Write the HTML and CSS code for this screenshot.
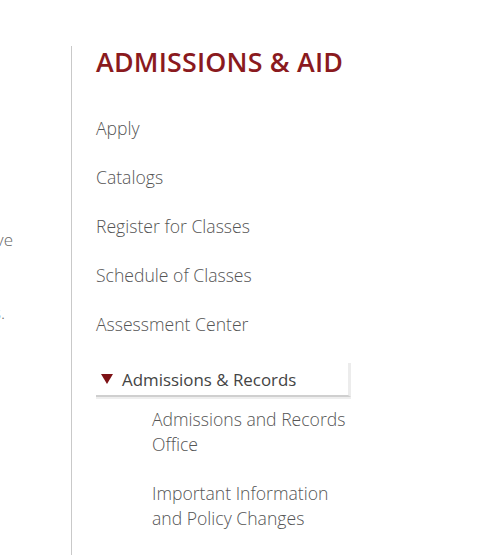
FILE: index.html
```html
<!DOCTYPE html>
<html lang="en">
<head>
<meta charset="utf-8">
<link rel="stylesheet" href="styles.css">
</head>
<body>
<div class="page">
  <div class="left">
    <div class="left-inner">
      <p class="frag frag-1">students who achieve</p>
      <p class="frag frag-2">their goals.</p>
    </div>
  </div>
  <nav class="side">
    <h2 class="title">ADMISSIONS &amp; AID</h2>
    <ul class="menu">
      <li><a href="#">Apply</a></li>
      <li><a href="#">Catalogs</a></li>
      <li><a href="#">Register for Classes</a></li>
      <li><a href="#">Schedule of Classes</a></li>
      <li><a href="#">Assessment Center</a></li>
    </ul>
    <div class="group">
      <div class="group-head"><span class="tri"></span><span class="group-label">Admissions &amp; Records</span></div>
      <ul class="sub">
        <li><a href="#">Admissions and Records Office</a></li>
        <li><a href="#">Important Information and Policy Changes</a></li>
      </ul>
    </div>
  </nav>
</div>
</body>
</html>
```
FILE: styles.css
```css
html, body {
  margin: 0;
  padding: 0;
  background: #fff;
}
body {
  font-family: "Open Sans", "Noto Sans", sans-serif;
  color: #555;
  height: 555px;
  overflow: hidden;
}
.page {
  display: flex;
  padding-top: 46px;
  height: 509px;
}
.left {
  width: 71px;
  flex: none;
  overflow: hidden;
  border-right: 1px solid #c9c9c9;
  position: relative;
}
.left-inner {
  margin-left: -287px;
  width: 300px;
  text-align: right;
  font-size: 17px;
  font-weight: 300;
  color: #666;
}
.frag {
  margin: 0;
  white-space: nowrap;
}
.frag-1 {
  padding-top: 182px;
}
.frag-2 {
  margin-top: 50px;
  padding-right: 8px;
}
.side {
  padding-left: 24px;
  width: 280px;
}
.title {
  margin: 0;
  padding-top: 0;
  font-size: 26.8px;
  line-height: 32px;
  font-weight: 600;
  color: #8a1a1e;
  letter-spacing: 0.2px;
}
.menu {
  list-style: none;
  margin: 38px 0 0;
  padding: 0;
}
.menu li {
  height: 49px;
}
.menu a, .sub a {
  text-decoration: none;
  color: #555;
  font-size: 17.6px;
  font-weight: 300;
  line-height: 25px;
}
.group {
  margin-top: 2px;
}
.group-head {
  width: 252px;
  height: 32px;
  display: flex;
  align-items: center;
  border-right: 3px solid #ececec;
  border-bottom: 2px solid #cfcfcf;
  box-shadow: 0 2px 0 #eeeeee;
}
.tri {
  width: 0;
  height: 0;
  border-left: 6px solid transparent;
  border-right: 6px solid transparent;
  border-top: 10px solid #7e1216;
  margin-left: 5px;
  margin-right: 9px;
}
.group-label {
  font-size: 16.9px;
  color: #444;
}
.sub {
  list-style: none;
  margin: 10px 0 0;
  padding: 0 0 0 56px;
  width: 196px;
}
.sub li {
  margin-bottom: 24px;
}
```
